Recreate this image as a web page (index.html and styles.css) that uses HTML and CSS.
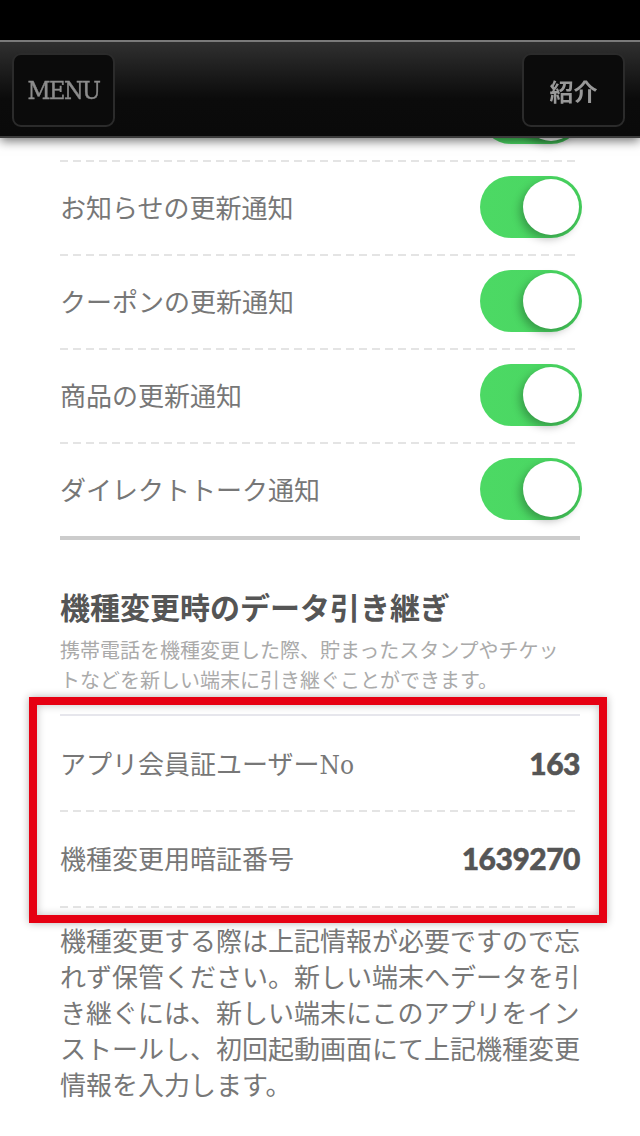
FILE: index.html
```html
<!DOCTYPE html>
<html lang="ja">
<head>
<meta charset="utf-8">
<title>設定</title>
<link rel="stylesheet" href="styles.css">
</head>
<body>
<div class="statusbar"></div>
<header class="topbar">
  <button class="navbtn navbtn-menu">MENU</button>
  <button class="navbtn navbtn-intro">紹介</button>
</header>
<main class="page">
  <ul class="settings">
    <li class="row"><span class="label"></span><span class="toggle on"><span class="knob"></span></span></li>
    <li class="row"><span class="label">お知らせの更新通知</span><span class="toggle on"><span class="knob"></span></span></li>
    <li class="row"><span class="label">クーポンの更新通知</span><span class="toggle on"><span class="knob"></span></span></li>
    <li class="row"><span class="label">商品の更新通知</span><span class="toggle on"><span class="knob"></span></span></li>
    <li class="row"><span class="label">ダイレクトトーク通知</span><span class="toggle on"><span class="knob"></span></span></li>
  </ul>
  <section class="transfer">
    <h2 class="transfer-title">機種変更時のデータ引き継ぎ</h2>
    <p class="transfer-desc">携帯電話を機種変更した際、貯まったスタンプやチケットなどを新しい端末に引き継ぐことができます。</p>
    <div class="info-group">
      <div class="info-row"><span class="label">アプリ会員証ユーザーNo</span><span class="value">163</span></div>
      <div class="info-row"><span class="label">機種変更用暗証番号</span><span class="value">1639270</span></div>
    </div>
    <p class="transfer-note">機種変更する際は上記情報が必要ですので忘れず保管ください。新しい端末へデータを引き継ぐには、新しい端末にこのアプリをインストールし、初回起動画面にて上記機種変更情報を入力します。</p>
  </section>
</main>
</body>
</html>
```
FILE: styles.css
```css
* { box-sizing: border-box; }
html, body { margin: 0; padding: 0; }
body {
  background: #fff;
  font-family: "Noto Sans CJK JP", "Noto Sans", sans-serif;
  width: 640px;
  height: 1136px;
  overflow: hidden;
}
.statusbar {
  height: 40px;
  background: #000;
}
.topbar {
  position: fixed;
  top: 40px;
  left: 0;
  width: 640px;
  height: 98px;
  z-index: 10;
  display: flex;
  align-items: center;
  justify-content: space-between;
  padding: 0 15px 0 12px;
  border-top: 2px solid #7a7a7a;
  border-bottom: 2px solid #3c3c3c;
  background: linear-gradient(#303030 0%, #1a1a1a 35%, #0b0b0b 60%, #0a0a0a 100%);
  box-shadow: 0 3px 10px rgba(0,0,0,0.55);
}
.navbtn {
  width: 103px;
  height: 74px;
  border: 2px solid #2b2b2b;
  border-radius: 9px;
  background: #0b0b0b;
  color: #8a8a8a;
  padding: 0;
  margin-top: 2px;
}
.navbtn-menu {
  font-family: "DejaVu Serif Condensed", "DejaVu Serif", serif;
  font-stretch: condensed;
  font-size: 25px;
  letter-spacing: -1.5px;
  -webkit-text-stroke: 0.4px #8c8c8c;
  color: #8c8c8c;
}
.navbtn-intro {
  font-family: "Noto Sans CJK JP", sans-serif;
  font-weight: 700;
  font-size: 24px;
  color: #999;
}
.page {
  padding: 26px 60px 0 60px;
}
.settings {
  list-style: none;
  margin: 0;
  padding: 0;
  border-bottom: 4px solid #cccccc;
}
.row, .info-row {
  display: flex;
  align-items: center;
  justify-content: space-between;
  background-image: repeating-linear-gradient(90deg, #e4e4e4 0 8px, transparent 8px 13px);
  background-size: 100% 2px;
  background-repeat: no-repeat;
  background-position: top left;
  padding-top: 2px;
}
.row { height: 94px; padding-bottom: 3px; }
.label {
  font-size: 26px;
  color: #777;
  font-weight: 400;
  font-family: "DejaVu Serif Condensed", "Noto Sans CJK JP", sans-serif;
  font-stretch: condensed;
}
.row .label { font-family: "Noto Sans CJK JP", sans-serif; }
.toggle {
  width: 102px;
  height: 62px;
  border-radius: 31px;
  background: linear-gradient(90deg, #4cd964 0%, #4bd763 60%, #45cf5c 100%);
  position: relative;
  margin-right: -2px;
  flex: none;
}
.knob {
  position: absolute;
  top: 3px;
  right: 3px;
  width: 56px;
  height: 56px;
  border-radius: 50%;
  background: #fff;
  box-shadow: -3px 4px 8px rgba(0,0,0,0.28);
}
.transfer-title {
  margin: 46px 0 0 0;
  font-size: 30px;
  line-height: 40px;
  font-weight: 700;
  color: #555;
}
.transfer-desc {
  margin: 9px 0 0 0;
  padding-right: 8px;
  font-size: 20px;
  line-height: 30px;
  color: #aaa;
}
.info-group {
  position: relative;
  margin-top: 19px;
  border-top: 2px solid #e6e6ec;
}
.info-group::after {
  content: "";
  position: absolute;
  top: -19px;
  bottom: -15px;
  left: -31px;
  right: -27px;
  border: 8px solid #e60012;
  box-shadow: 0 0 8px rgba(0,0,0,0.3), inset 0 0 8px rgba(0,0,0,0.25);
  pointer-events: none;
}
.info-row { height: 94px; padding-bottom: 3px; }
.info-row:first-child { background-image: none; }
.info-row:last-child {
  height: 98px;
  background-image: repeating-linear-gradient(90deg, #e4e4e4 0 8px, transparent 8px 13px), repeating-linear-gradient(90deg, #e4e4e4 0 8px, transparent 8px 13px);
  background-size: 100% 2px, 100% 2px;
  background-position: top left, bottom left;
  padding-bottom: 5px;
}
.value {
  font-family: "Lato", sans-serif;
  font-weight: 900;
  font-size: 30px;
  color: #555;
  letter-spacing: -0.5px;
  -webkit-text-stroke: 0.5px #555;
}
.transfer-note {
  margin: 14px 0 0 0;
  font-size: 26px;
  line-height: 36px;
  color: #777;
}
```
